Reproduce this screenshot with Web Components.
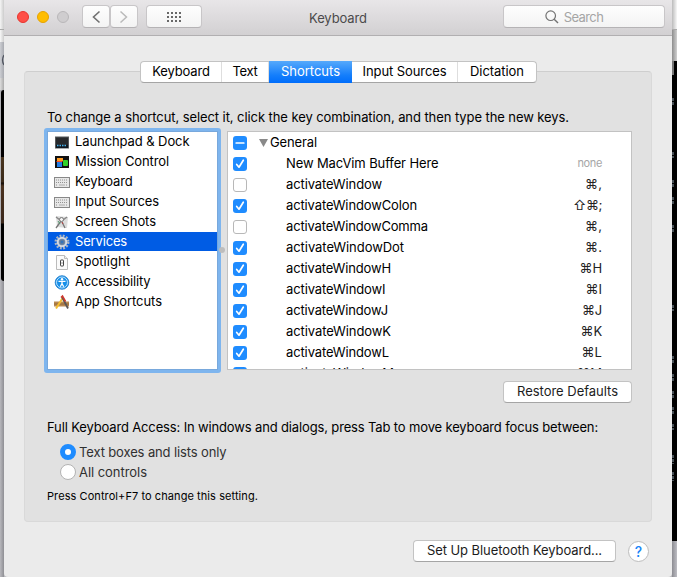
<!DOCTYPE html>
<html lang="en">
<head>
<meta charset="utf-8">
<title>Keyboard</title>
<style>
html,body{margin:0;height:577px;overflow:hidden}
body{font:13px/20px Inter,"Liberation Sans","DejaVu Sans",sans-serif;color:#000;background:#b9b9bd}
</style>
</head>
<body>
<keyboard-prefs></keyboard-prefs>
<script>
const define=(name,html,init)=>customElements.define(name,class extends HTMLElement{
  connectedCallback(){
    if(this.shadowRoot)return;
    const t=document.createElement('template');
    t.innerHTML=typeof html==='function'?html(this):html;
    this.attachShadow({mode:'open'}).append(t.content.cloneNode(true));
    if(init)init(this,this.shadowRoot);
  }
});

/* A single line of text, tracked so that it fills the width in its "w" attribute. */
define('ui-text','<style>:host{display:inline-block;white-space:pre}span{display:inline-block}</style><span><slot></slot></span>',(el,root)=>{
  const w=parseFloat(el.getAttribute('w'));
  if(!w)return;
  const s=root.querySelector('span'),n=el.textContent.length;
  s.style.letterSpacing=((w-s.getBoundingClientRect().width)/n).toFixed(3)+'px';
});

define('desktop-strip',el=>`<style>:host{display:flex;flex-direction:column;height:577px;overflow:hidden;box-sizing:border-box}
div{flex:none;overflow:hidden;color:#70809a;font-size:11px}
.l1{height:29px;background:linear-gradient(90deg,#f5f5f5,#ccc)}.l2{height:12px;background:linear-gradient(90deg,#f8f8f8,#ccc);border-top:1px solid #aaa}
.l3{height:36px;background:linear-gradient(90deg,#ccced3,#a8aab0)}.l3 svg{display:block;margin-top:10px}.l4{height:12px;background:linear-gradient(90deg,#ddd,#aaa)}
.l5{height:191px;margin-left:1px;border-radius:5px 0 0 5px;background:linear-gradient(#000 67px,#49351f 67px,#3a2a1a 92px,#100b08 93px,#4a321f 96px,#3b281c 133px,#000 134px)}
.r1{height:29px;background:linear-gradient(90deg,#bbb,#f7f7f7)}.r2{height:31px;border-top:1px solid #aaa;background:linear-gradient(90deg,#8d8d8d,#d0d0d0)}
.r3{height:480px;background:#000}.r3 svg{display:block}.r4{flex:1;background:linear-gradient(90deg,#8c8c92,#bdbdc3)}
:host([side=left]){background:linear-gradient(90deg,#b8b8bd,#8f8f94)}</style>`+
(el.getAttribute('side')==='left'
?'<div class="l1"></div><div class="l2"></div><div class="l3"><svg width="4" height="16"><path d="M4 3Q1 8 4 13" fill="none" stroke="#505560" stroke-width="1.3"/></svg></div><div class="l4"></div><div class="l5"></div>'
:'<div class="r1"></div><div class="r2"></div><div class="r3"><svg width="5" height="480"><path d="M0 0h2v14H0z" fill="#777"/><path d="M1 37v8M1 91v6M1 119v8M1 136v8M1 164v7M1 244v6M1 295v7M1 313v8M1 330v8M1 346v8M1 363v6M1 394v9M1 411v9" stroke="#59636b" stroke-width="1.6" stroke-dasharray="3 1"/></svg></div><div class="r4"></div>'));

define('tool-button','<style>:host{display:flex;align-items:center;justify-content:center;box-sizing:border-box;height:23px;border:1px solid #c8c6c8;border-bottom-color:#b5b3b5;border-radius:4px;background:linear-gradient(#fefefe,#f3f3f3);color:#aaa}</style><slot></slot>');

define('title-bar',`<style>
:host{display:grid;grid-template-columns:78px 56px 8px 56px 1fr 162px 7px;height:36px;box-sizing:border-box;padding-top:5px;border-bottom:1px solid #b1afb1;background:linear-gradient(#e8e6e8,#d2d0d2);align-items:start}
.lights{display:flex;gap:8px;padding:6px 0 0 13px}
.lights i{width:12px;height:12px;box-sizing:border-box;border-radius:50%;background:#ff4f47;border:1px solid #e7352f}
.lights i:nth-child(2){background:#ffbd00;border-color:#e6a301}.lights i:nth-child(3){background:#cfcdcf;border-color:#b9b7b9}
.nav{display:grid;grid-template-columns:28px 28px}
.title{justify-self:start;margin:3px 0 0 107px;color:#4b4a4b}
.search{padding-right:20px}.search ui-text{color:#a5a5a5}
svg{display:block;flex:none}
</style>
<div class="lights"><i></i><i></i><i></i></div>
<div class="nav"><tool-button><svg width="10" height="14"><path d="M8.5 1.5L2.5 7l6 5.5" fill="none" stroke="#707070" stroke-width="1.6"/></svg></tool-button><tool-button><svg width="10" height="14"><path d="M1.5 1.5L7.500 7l-6 5.500" fill="none" stroke="#bababa" stroke-width="1.5"/></svg></tool-button></div><span></span>
<tool-button><svg width="14" height="10"><path d="M0 1h14M0 5h14M0 9h14" stroke="#686868" stroke-width="2" stroke-dasharray="2 2"/></svg></tool-button>
<ui-text class="title" w="58">Keyboard</ui-text>
<tool-button class="search"><svg width="14" height="14" style="margin-right:5px"><circle cx="5.700" cy="5.700" r="4.800" fill="none" stroke="#737373" stroke-width="1.200"/><path d="M9.200 9.200L13 13" stroke="#737373" stroke-width="1.400"/></svg><ui-text w="39.500">Search</ui-text></tool-button>`);

define('tab-strip',`<style>
:host{display:grid;grid-template-columns:81px 47px 83px 106px 78px;width:395px;height:20px;border:1px solid #c3c3c3;border-bottom-color:#a5a5a5;border-radius:4px;background:#fff;line-height:19px}
div{text-align:center;border-right:1px solid #dedede;height:20px}
div:first-child{padding-left:1px;box-sizing:border-box}
div:nth-child(-n+4){box-sizing:border-box}
div:last-child{border:0}div.on{box-sizing:content-box;margin:-1px 0;padding:1px 0;border:0;color:#fff;background:linear-gradient(#56a9fb,#147efb 65%,#006dfb);height:20px}
</style><div><ui-text w="57.5">Keyboard</ui-text></div><div><ui-text w="25">Text</ui-text></div><div class="on"><ui-text w="59">Shortcuts</ui-text></div><div><ui-text w="84">Input Sources</ui-text></div><div><ui-text w="54">Dictation</ui-text></div>`);

const icons={
launch:'<rect x="1.500" y="3" width="13" height="11" fill="#27292c" stroke="#55585b"/><path d="M2 11h12v3H2z" fill="#101820"/><path d="M3 11.500h10" stroke="#49b4ed" stroke-width="1.300" stroke-dasharray="1.500 1"/>',
mission:'<rect x="1" y="2" width="14" height="12" fill="#111"/><path d="M3 4h6v3H3z" fill="#ff9d24"/><path d="M3 8h5v5H3z" fill="#247ee4"/><rect x="9" y="6" width="5" height="6" rx="1" fill="#32d22a"/><path d="M2.500 7.500h6" stroke="#f54d2b"/>',
keys:'<rect x=".5" y="3.500" width="15" height="10" fill="#e7e7e7" stroke="#888"/><path d="M2 6h12M2 8.500h12M2 11h2M12 11h2" stroke="#929292" stroke-dasharray="1 1"/><path d="M5 11h6" stroke="#aaa"/>',
shots:'<path d="M2 2l12 1-1 11-10-1z" fill="#dcdcdc"/><path d="M2 3l4 3M13 3L9 6" stroke="#888" fill="none" stroke-width="1.500"/><path d="M7 7l-5 7M8 8l3 6" stroke="#777" stroke-width="1.300"/><circle cx="7.500" cy="5.500" r="2" fill="#f4f4f4" stroke="#777"/><path d="M4 7l2 3" stroke="#559a70"/><path d="M8 8l1 2" stroke="#bd4444"/>',
gear:'<circle cx="8" cy="8" r="6.300" fill="none" stroke="#aab4c1" stroke-width="2.400" stroke-dasharray="1.900 1.400"/><circle cx="8" cy="8" r="4.300" fill="#718cad" stroke="#d6dae0" stroke-width="2"/><circle cx="8" cy="8" r="2" fill="#3475bb" stroke="#657c97"/>',
spot:'<path d="M2.500 1.500h8l3 3v11h-11z" fill="#fafafa" stroke="#bbb"/><path d="M10.500 1.500v3h3" fill="#eee" stroke="#bbb"/><rect x="6.500" y="6" width="3" height="6" rx=".5" fill="#fff" stroke="#444"/><path d="M8 8v2" stroke="#999"/>',
access:'<circle cx="8" cy="8.500" r="6.800" fill="#168fe9" stroke="#1878c9" stroke-width=".8"/><circle cx="8" cy="8.500" r="5.500" fill="none" stroke="#dff3ff" stroke-width=".8"/><circle cx="8" cy="5.200" r="1.200" fill="#fff"/><path d="M4.500 7.400h7M8 7v3M8 9.500l-1.700 3.200M8 9.500l1.700 3.200" stroke="#fff" stroke-width="1.300" fill="none"/>',
apps:'<path d="M0 7.500h15v5H0z" fill="#b88952"/><path d="M0 10h15" stroke="#94683a"/><path d="M9 3.500L2 14.500" stroke="#f3bd30" stroke-width="2"/><path d="M8 3l6 11.500" stroke="#5b5656" stroke-width="1.800"/><path d="M7 3.500l1.500-1.500 3 5.500" stroke="#cf392e" stroke-width="1.600" fill="none"/>'
};
define('category-row',el=>`<style>:host{display:flex;align-items:center;height:20px;padding-left:6px}:host([selected]){height:20px;color:#fff;background:linear-gradient(#005ce4 19px,#fff 19px)}svg{display:block;width:16px;height:16px;margin-right:5px}ui-text{padding-bottom:2px}</style><svg viewBox="0 0 16 16">${icons[el.getAttribute('icon')]}</svg><ui-text w="${el.getAttribute('w')}">${el.getAttribute('label').replace('&','&amp;')}</ui-text>`);

define('category-list',`<style>:host{display:block;box-sizing:border-box;width:177px;height:245px;border:3px solid #7eb5ee;outline:0;border-radius:3px;background:#fff}
.in{height:237px;border:1px solid #78a8dc}</style><div class="in">`+
[['launch','Launchpad & Dock',114.5],['mission','Mission Control',94],['keys','Keyboard',57.5],['keys','Input Sources',84],['shots','Screen Shots',81],['gear','Services',52],['spot','Spotlight',55],['access','Accessibility',75.5],['apps','App Shortcuts',87]]
.map(r=>`<category-row icon="${r[0]}" label="${r[1].replace('&','&amp;')}" w="${r[2]}"${r[0]==='gear'?' selected':''}></category-row>`).join('')+'</div>');

define('check-box',el=>{const s=el.getAttribute('state');return `<style>:host{display:block;width:14px;height:14px}svg{display:block}</style><svg width="14" height="14">${s==='off'?'<rect x=".5" y=".5" width="13" height="13" rx="2.500" fill="#fff" stroke="#b8b8b8"/>':'<rect width="14" height="14" rx="3" fill="#1f8cff"/><path d="'+(s==='on'?'M3.700 7.500l2.300 2.700 4.300-7':'M3.200 7h7.600')+'" fill="none" stroke="#fff" stroke-width="1.700" stroke-linecap="round" stroke-linejoin="round"/>'}</svg>`});

define('shortcut-row',el=>{const a=n=>el.getAttribute(n);return `<style>:host{display:grid;grid-template-columns:14px 1fr auto;align-items:center;height:21px;padding:0 29px 0 5px}
ui-text{height:20px;margin-bottom:2px;vertical-align:top}.name{padding-left:39px}.group{display:flex;align-items:center;padding-left:12px;gap:2px}.none{font-size:11px;color:#a6a6a6}.key{color:#222}</style><check-box state="${a('state')}"></check-box>${a('group')!==null?`<div class="group"><svg width="9" height="8"><path d="M0 0h9L4.500 8z" fill="#898989"/></svg><ui-text w="${a('w')}">${a('label')}</ui-text></div>`:`<div class="name"><ui-text w="${a('w')}">${a('label')}</ui-text></div>`}<ui-text class="${a('key')==='none'?'none':'key'}" w="${a('kw')}">${a('key')||''}</ui-text>`});

define('shortcut-table',`<style>:host{display:block;box-sizing:border-box;width:405px;height:239px;overflow:hidden;border:1px solid #c2c2c2;background:#fff}</style>`+
[['mixed','General',47,'',0,1],['on','New MacVim Buffer Here',152.5,'none',24.5],['off','activateWindow',96,'⌘,',17],['on','activateWindowColon',131,'⇧⌘;',29],['off','activateWindowComma',142,'⌘,',17],['on','activateWindowDot',118,'⌘.',17],['on','activateWindowH',105,'⌘H',22.5],['on','activateWindowI',99.5,'⌘I',16.5],['on','activateWindowJ',102,'⌘J',20],['on','activateWindowK',105,'⌘K',21.5],['on','activateWindowL',103,'⌘L',20.5],['on','activateWindowM',108,'⌘M',25]]
.map(r=>`<shortcut-row state="${r[0]}" label="${r[1]}" w="${r[2]}" key="${r[3]}" kw="${r[4]}"${r[5]?' group':''}></shortcut-row>`).join(''));

define('push-button','<style>:host{display:block;box-sizing:border-box;height:22px;border:1px solid #c3c3c3;border-bottom-color:#a5a5a5;border-radius:4px;background:#fff;text-align:center;line-height:18px;color:#1c1c1c}</style><slot></slot>');
define('radio-option',`<style>:host{display:flex;align-items:center;height:20px;gap:3px;color:#303030}i{box-sizing:border-box;width:16px;height:16px;border-radius:50%;border:1px solid #b3b3b3;background:#fff}:host([checked]) i{border:5px solid #1f8cff}</style><i></i><slot></slot>`);
define('split-pane',`<style>:host{display:grid;grid-template-columns:177px 405px;gap:6px;align-items:start;position:relative}shortcut-table{margin-top:3px}.grip{position:absolute;left:175px;top:119px;width:6px;height:6px;border-radius:50%;background:#bdbdbd}</style><category-list></category-list><shortcut-table></shortcut-table><span class="grip"></span>`);

define('prefs-panel',`<style>
:host{display:flex;flex-direction:column;align-items:flex-start;box-sizing:border-box;height:451px;margin:0 20px;padding-left:22px;border:1px solid #d9d9d9;border-top-color:#cecece;border-radius:4px;background:#e1e1e1}
tab-strip{margin:-11px 0 0 93px}.lead{margin-top:24px}split-pane{margin:1px 0 0 -3px}push-button{width:129px;margin:8px 0 0 456px}.access{margin-top:14px}
.radios{margin:5px 0 0 13px}.note{font-size:11px;margin-top:4px}
</style><tab-strip></tab-strip><ui-text class="lead" w="522">To change a shortcut, select it, click the key combination, and then type the new keys.</ui-text>
<split-pane></split-pane><push-button><ui-text w="101">Restore Defaults</ui-text></push-button>
<ui-text class="access" w="551">Full Keyboard Access: In windows and dialogs, press Tab to move keyboard focus between:</ui-text>
<div class="radios"><radio-option checked><ui-text w="147.500">Text boxes and lists only</ui-text></radio-option><radio-option><ui-text w="68">All controls</ui-text></radio-option></div>
<ui-text class="note" w="211">Press Control+F7 to change this setting.</ui-text>`);

define('keyboard-prefs',`<style>
:host{display:grid;grid-template-columns:4px 668px 5px;height:577px}
main{display:flex;flex-direction:column;background:#ebebeb;border-radius:0 0 4px 4px}
prefs-panel{margin-top:35px}
footer{display:flex;gap:12px;justify-content:flex-end;padding:18px 23px 0 0}footer push-button{width:203px}
.help{box-sizing:border-box;width:21px;height:21px;margin-top:1px;border-radius:50%;border:1px solid #bdbdbd;background:#fff;color:#1684f8;text-align:center;font-size:14px;line-height:19px;font-weight:500}
</style><desktop-strip side="left"></desktop-strip><main><title-bar></title-bar><prefs-panel></prefs-panel><footer><push-button><ui-text w="175">Set Up Bluetooth Keyboard...</ui-text></push-button><div class="help">?</div></footer></main><desktop-strip side="right"></desktop-strip>`);
</script>
</body>
</html>
